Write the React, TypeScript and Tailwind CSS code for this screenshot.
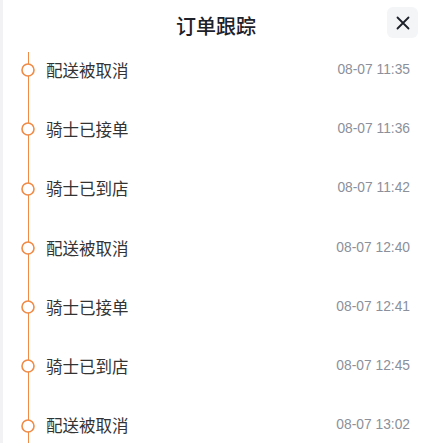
const events = [
  { label: "配送被取消", time: "08-07 11:35" },
  { label: "骑士已接单", time: "08-07 11:36" },
  { label: "骑士已到店", time: "08-07 11:42" },
  { label: "配送被取消", time: "08-07 12:40" },
  { label: "骑士已接单", time: "08-07 12:41" },
  { label: "骑士已到店", time: "08-07 12:45" },
  { label: "配送被取消", time: "08-07 13:02" },
];

export default function App() {
  return (
    <div
      className="flex h-[443px] w-[429px] overflow-hidden bg-white"
      style={{ fontFamily: '"Noto Sans CJK SC", "Noto Sans", sans-serif' }}
    >
      <div className="w-[3px] shrink-0 bg-[#f2f2f4]" />
      <div className="flex flex-1 flex-col">
        <div className="relative flex h-[52px] shrink-0 items-center justify-center">
          <h1 className="text-[20px] font-medium text-[#1d2129]">订单跟踪</h1>
          <button className="absolute right-[11px] top-[7px] flex h-[31px] w-[31px] items-center justify-center rounded-md bg-[#f4f5f7] text-[#1d2129]">
            <svg width="16" height="16" viewBox="0 0 16 16" fill="none" stroke="currentColor" strokeWidth="1.8" strokeLinecap="round">
              <path d="M2.5 2.5l11 11M13.5 2.5l-11 11" />
            </svg>
          </button>
        </div>
        <div className="relative flex shrink-0 flex-col">
          <div className="absolute bottom-0 left-[24.5px] top-0 w-px bg-[#f08a44]" />
          {events.map((e, i) => (
            <div key={i} className="relative flex h-[59.3px] shrink-0 items-start">
              <div className="flex h-[36px] w-[43px] shrink-0 items-center pl-[18px]">
                <svg className="relative z-10 shrink-0" width="14" height="14" viewBox="0 0 14 14">
                  <circle cx="7" cy="7" r="6" fill="#fff" stroke="#f08a44" strokeWidth="1.6" />
                </svg>
              </div>
              <div className="flex h-[36px] flex-1 items-center justify-between pr-[19px]">
                <span className="text-[16.5px] text-[#333333]">{e.label}</span>
                <span
                  className="text-[13.8px] text-[#8b909a]"
                  style={{ fontFamily: '"Liberation Sans", Arial, sans-serif' }}
                >
                  {e.time}
                </span>
              </div>
            </div>
          ))}
        </div>
      </div>
    </div>
  );
}
